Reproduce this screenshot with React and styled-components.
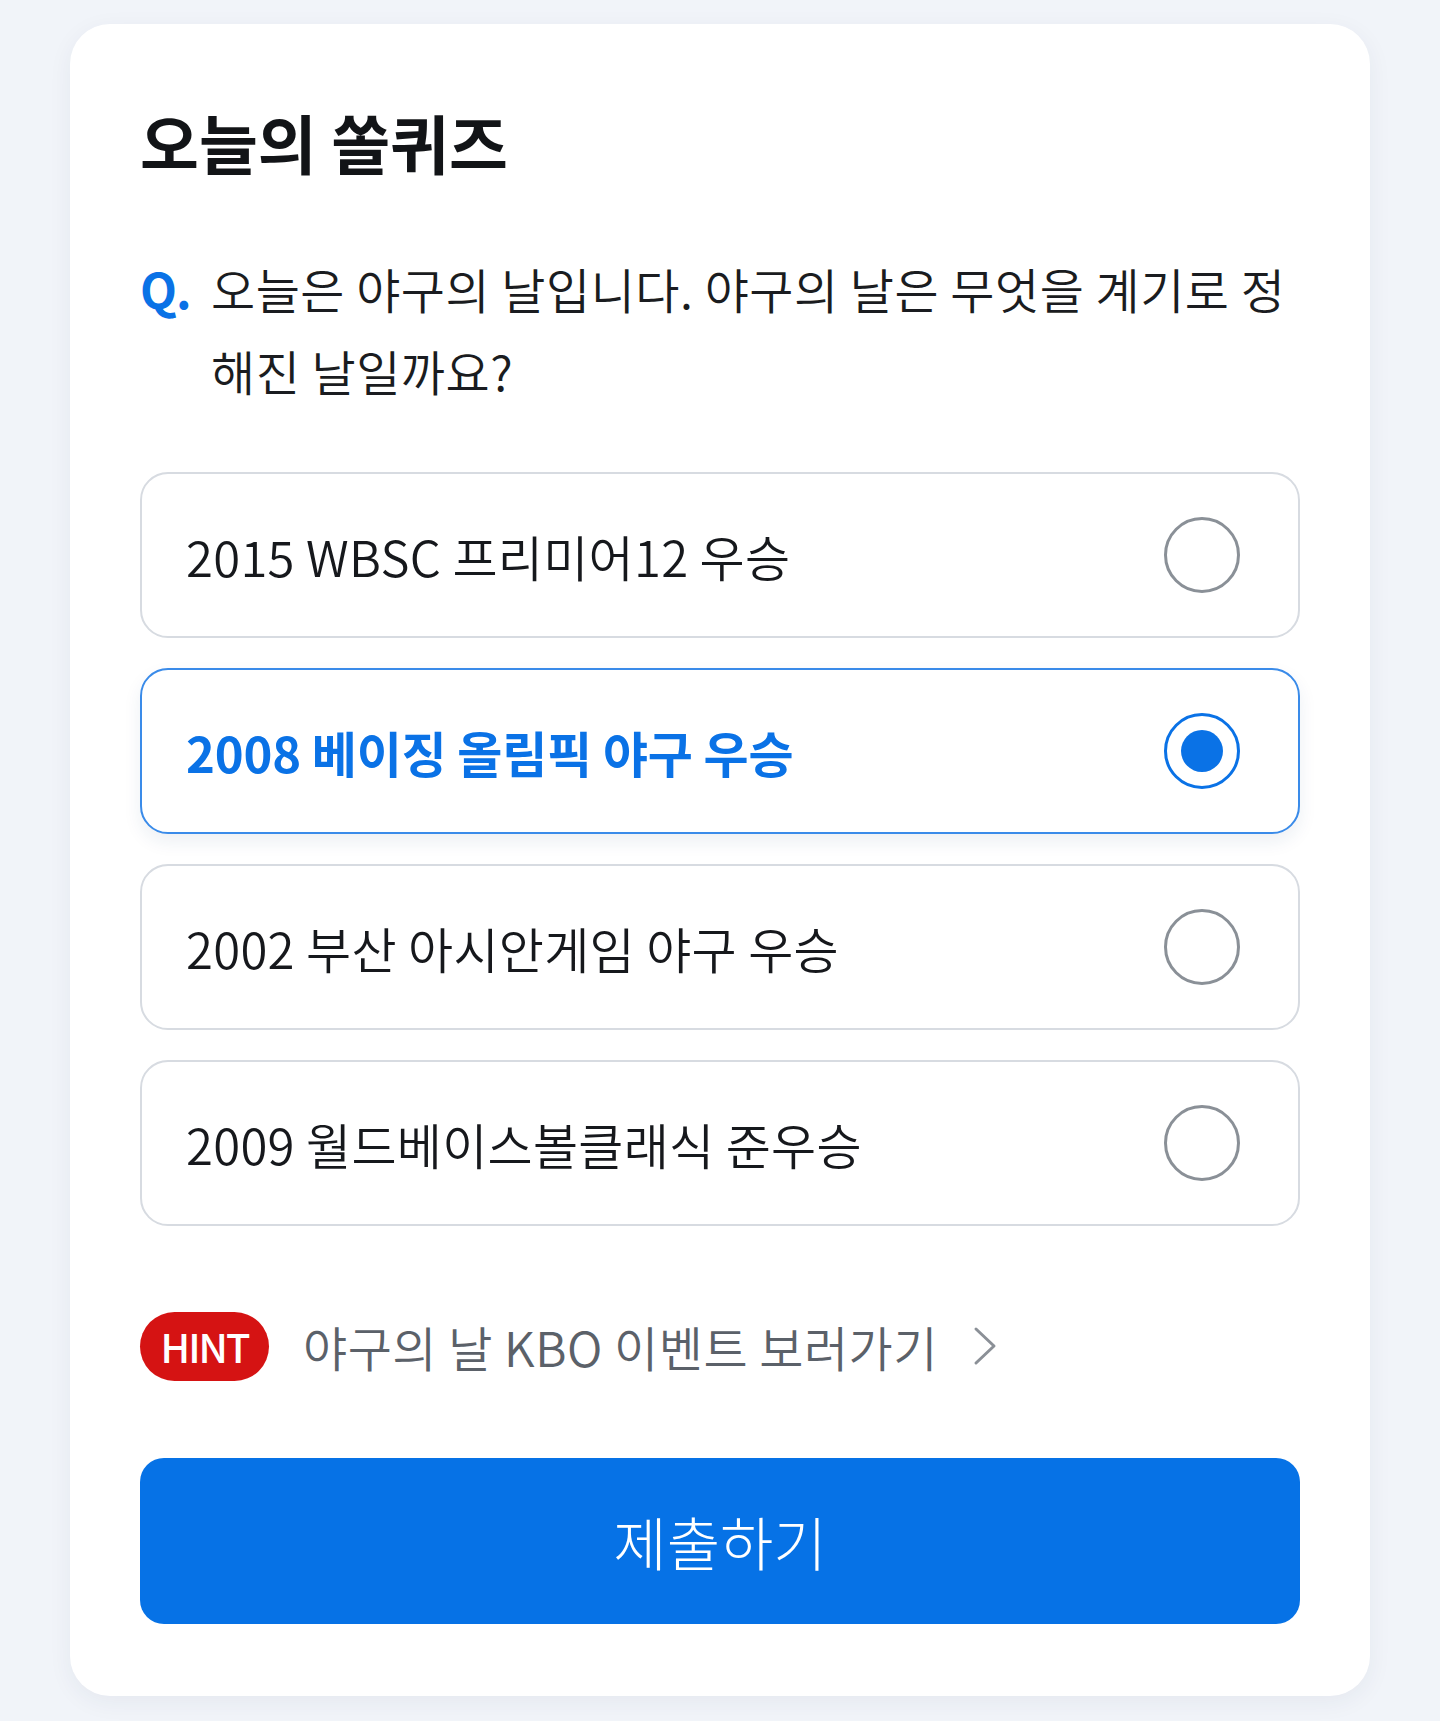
import React, { useState } from 'react';
import styled, { createGlobalStyle } from 'styled-components';

const GlobalStyle = createGlobalStyle`
  body {
    margin: 0;
    background: #f1f4f9;
    font-family: "Noto Sans CJK KR", "Noto Sans", sans-serif;
  }
`;

const Page = styled.div`
  padding: 24px 70px 25px;
`;

const Card = styled.section`
  background: #ffffff;
  border-radius: 40px;
  padding: 79px 70px 72px;
  box-shadow: 0 6px 24px rgba(30, 50, 90, 0.06);
`;

const Title = styled.h1`
  margin: 0;
  font-size: 64px;
  line-height: 77px;
  font-weight: 700;
  color: #121417;
`;

const Question = styled.div`
  display: flex;
  margin-top: 67px;
  font-size: 48px;
  font-weight: 350;
  line-height: 82px;
  letter-spacing: 0.5px;
  color: #1a1c20;
`;

const QMark = styled.span`
  flex: none;
  width: 71px;
  color: #0a72e6;
  font-weight: 700;
  letter-spacing: -1px;
`;

const Options = styled.div`
  display: flex;
  flex-direction: column;
  gap: 30px;
  margin-top: 61px;
`;

const Option = styled.button`
  display: flex;
  align-items: center;
  justify-content: space-between;
  height: 166px;
  padding: 0 58px 0 44px;
  background: #ffffff;
  border: 2px solid ${p => (p.$active ? '#3a8be9' : '#d7dbe1')};
  border-radius: 28px;
  box-shadow: ${p => (p.$active ? '0 8px 18px rgba(20, 60, 120, 0.08)' : 'none')};
  font-family: inherit;
  font-size: 49px;
  font-weight: ${p => (p.$active ? 700 : 350)};
  letter-spacing: ${p => (p.$active ? '-0.2px' : '0.3px')};
  color: ${p => (p.$active ? '#0a72e6' : '#16181c')};
  text-align: left;
  cursor: pointer;
`;

const Radio = styled.span`
  flex: none;
  display: flex;
  align-items: center;
  justify-content: center;
  width: 76px;
  height: 76px;
  box-sizing: border-box;
  border-radius: 50%;
  border: 3px solid ${p => (p.$active ? '#0a72e6' : '#8a9097')};

  &::after {
    content: '';
    display: ${p => (p.$active ? 'block' : 'none')};
    width: 42px;
    height: 42px;
    border-radius: 50%;
    background: #0a72e6;
  }
`;

const HintRow = styled.a`
  display: flex;
  align-items: center;
  margin-top: 85px;
  text-decoration: none;
  cursor: pointer;
`;

const HintBadge = styled.span`
  flex: none;
  display: flex;
  align-items: center;
  justify-content: center;
  width: 129px;
  height: 69px;
  border-radius: 35px;
  background: #d51313;
  color: #ffffff;
  font-size: 40px;
  font-weight: 500;
  letter-spacing: -2px;
`;

const HintText = styled.span`
  margin-left: 34px;
  font-size: 48px;
  font-weight: 350;
  letter-spacing: 0.5px;
  color: #5b6169;
`;

const Chevron = styled.svg`
  margin-left: 34px;
  width: 26px;
  height: 42px;
`;

const Submit = styled.button`
  display: block;
  width: 100%;
  height: 166px;
  margin-top: 77px;
  border: none;
  border-radius: 24px;
  background: #0672e6;
  color: #ffffff;
  font-family: inherit;
  font-size: 58px;
  font-weight: 300;
  cursor: pointer;
`;

const choices = [
  '2015 WBSC 프리미어12 우승',
  '2008 베이징 올림픽 야구 우승',
  '2002 부산 아시안게임 야구 우승',
  '2009 월드베이스볼클래식 준우승',
];

export default function App() {
  const [picked, setPicked] = useState(1);

  return (
    <Page>
      <GlobalStyle />
      <Card>
        <Title>오늘의 쏠퀴즈</Title>
        <Question>
          <QMark>Q.</QMark>
          <span>오늘은 야구의 날입니다. 야구의 날은 무엇을 계기로 정해진 날일까요?</span>
        </Question>
        <Options>
          {choices.map((c, i) => (
            <Option key={c} $active={picked === i} onClick={() => setPicked(i)}>
              <span>{c}</span>
              <Radio $active={picked === i} />
            </Option>
          ))}
        </Options>
        <HintRow>
          <HintBadge>HINT</HintBadge>
          <HintText>야구의 날 KBO 이벤트 보러가기</HintText>
          <Chevron viewBox="0 0 26 42" fill="none">
            <path d="M4 4 L22 21 L4 38" stroke="#8b9097" strokeWidth="3" strokeLinecap="round" strokeLinejoin="round" />
          </Chevron>
        </HintRow>
        <Submit>제출하기</Submit>
      </Card>
    </Page>
  );
}
